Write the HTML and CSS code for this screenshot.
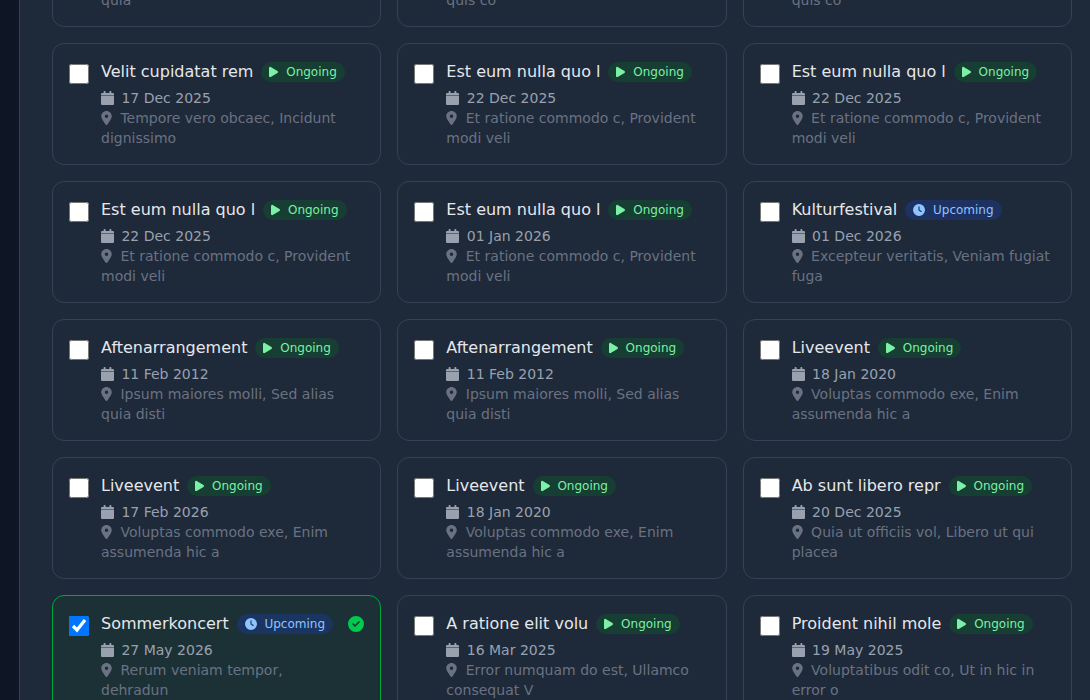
FILE: index.html
```html
<!DOCTYPE html>
<html lang="en">
  <head>
    <meta charset="UTF-8" />
    <meta name="viewport" content="width=device-width, initial-scale=1.0" />
    <title>Select events</title>
    <link rel="stylesheet" href="styles.css">
  </head>
  <body>
    <!-- Icon shapes shared by all cards -->
    <svg class="sprite" aria-hidden="true">
      <symbol id="play" viewBox="0 0 384 512">
        <path d="M73 39c-14.8-9.1-33.4-9.4-48.5-.9S0 62.6 0 80V432c0 17.4 9.4 33.4 24.5 41.9s33.7 8.1 48.5-.9L361 297c14.3-8.7 23-24.2 23-41s-8.7-32.2-23-41L73 39z" />
      </symbol>
      <symbol id="clock" viewBox="0 0 512 512">
        <path d="M256 0a256 256 0 1 1 0 512A256 256 0 1 1 256 0zM232 120V256c0 8 4 15.5 10.7 20l96 64c11 7.4 25.9 4.4 33.3-6.7s4.4-25.9-6.7-33.3L280 243.2V120c0-13.3-10.7-24-24-24s-24 10.7-24 24z" />
      </symbol>
      <symbol id="calendar" viewBox="0 0 13 14">
        <path d="M3.6 0C3 0 2.6.4 2.6 1v1H1.3C.6 2 0 2.5 0 3.2v1.3h13V3.2C13 2.5 12.4 2 11.7 2h-1.300V1c0-.6-.4-1-1-1s-1 .4-1 1v1H4.600V1c0-.6-.4-1-1-1zM0 5v7.700C0 13.400.6 14 1.300 14h10.400c.7 0 1.300-.6 1.300-1.300V5z" />
      </symbol>
      <symbol id="pin" viewBox="0 0 384 512">
        <path d="M215.7 499.2C267 435 384 279.4 384 192C384 86 298 0 192 0S0 86 0 192c0 87.4 117 243 168.3 307.2c12.3 15.3 35.1 15.3 47.4 0zM192 128a64 64 0 1 1 0 128 64 64 0 1 1 0-128z" />
      </symbol>
      <symbol id="check" viewBox="0 0 512 512">
        <path d="M256 512A256 256 0 1 0 256 0a256 256 0 1 0 0 512zM369 209L241 337c-9.4 9.4-24.6 9.4-33.9 0l-64-64c-9.4-9.4-9.4-24.6 0-33.9s24.6-9.4 33.9 0l47 47L335 175c9.4-9.4 24.6-9.4 33.9 0s9.4 24.6 0 33.9z" />
      </symbol>
    </svg>

    <main class="panel">
      <div class="event-grid" id="eventGrid">
        <!-- This row is scrolled almost out of view -->
        <div class="card scrolled"><span class="location">quia</span></div>
        <div class="card scrolled"><span class="location">quis co</span></div>
        <div class="card scrolled"><span class="location">quis co</span></div>
      </div>
    </main>

    <script>
      const events = [
        { title: "Velit cupidatat rem", date: "17 Dec 2025", location: "Tempore vero obcaec, Incidunt dignissimo" },
        { title: "Est eum nulla quo l", date: "22 Dec 2025", location: "Et ratione commodo c, Provident modi veli" },
        { title: "Est eum nulla quo l", date: "22 Dec 2025", location: "Et ratione commodo c, Provident modi veli" },
        { title: "Est eum nulla quo l", date: "22 Dec 2025", location: "Et ratione commodo c, Provident modi veli" },
        { title: "Est eum nulla quo l", date: "01 Jan 2026", location: "Et ratione commodo c, Provident modi veli" },
        { title: "Kulturfestival", date: "01 Dec 2026", location: "Excepteur veritatis, Veniam fugiat fuga", upcoming: true },
        { title: "Aftenarrangement", date: "11 Feb 2012", location: "Ipsum maiores molli, Sed alias quia disti" },
        { title: "Aftenarrangement", date: "11 Feb 2012", location: "Ipsum maiores molli, Sed alias quia disti" },
        { title: "Liveevent", date: "18 Jan 2020", location: "Voluptas commodo exe, Enim assumenda hic a" },
        { title: "Liveevent", date: "17 Feb 2026", location: "Voluptas commodo exe, Enim assumenda hic a" },
        { title: "Liveevent", date: "18 Jan 2020", location: "Voluptas commodo exe, Enim assumenda hic a" },
        { title: "Ab sunt libero repr", date: "20 Dec 2025", location: "Quia ut officiis vol, Libero ut qui placea" },
        { title: "Sommerkoncert", date: "27 May 2026", location: "Rerum veniam tempor, dehradun", upcoming: true, selected: true },
        { title: "A ratione elit volu", date: "16 Mar 2025", location: "Error numquam do est, Ullamco consequat V" },
        { title: "Proident nihil mole", date: "19 May 2025", location: "Voluptatibus odit co, Ut in hic in error o" },
      ];

      function icon(name) {
        return `<svg class="icon icon-${name}" aria-hidden="true"><use href="#${name}" /></svg>`;
      }

      // Build one card per event
      const eventGrid = document.getElementById("eventGrid");
      events.forEach((event) => {
        const card = document.createElement("label");
        card.className = event.selected ? "card selected" : "card";
        const badge = event.upcoming
          ? `<span class="badge upcoming">${icon("clock")} Upcoming</span>`
          : `<span class="badge ongoing">${icon("play")} Ongoing</span>`;
        card.innerHTML = `
          <input type="checkbox" class="card-check" ${event.selected ? "checked" : ""} />
          <span class="card-body">
            <span class="card-head"><span class="title">${event.title}</span>${badge}</span>
            <span class="date">${icon("calendar")} ${event.date}</span>
            <span class="location">${icon("pin")} ${event.location}</span>
          </span>
          ${event.selected ? icon("check") : ""}`;
        eventGrid.appendChild(card);
      });
    </script>
  </body>
</html>
```
FILE: styles.css
```css
* {
  box-sizing: border-box;
}
body {
  margin: 0;
  height: 100vh;
  overflow: hidden;
  padding-left: 19px;
  font-family: "DejaVu Sans", sans-serif;
  background-color: #0e1525;
}
.sprite {
  display: none;
}
.panel {
  height: 100vh;
  overflow: hidden;
  padding: 0 18px 0 32px;
  border-left: 1px solid #364153;
  background-color: #1e2939;
}
/* Scrolled part way through the first row */
.event-grid {
  display: grid;
  grid-template-columns: repeat(3, 1fr);
  gap: 16px;
  margin-top: -95px;
}
.card {
  display: flex;
  align-items: flex-start;
  gap: 12px;
  min-height: 122px;
  padding: 16px;
  border: 1px solid #364153;
  border-radius: 12px;
  cursor: pointer;
}
.card.scrolled {
  align-items: flex-end;
  padding-left: 48px;
}
.card.selected {
  border-color: #00a63e;
  background-color: rgba(13, 84, 43, 0.2);
}
.card-check {
  flex-shrink: 0;
  width: 20px;
  height: 20px;
  margin: 4px 0 0;
}
.card-body {
  flex: 1;
  min-width: 0;
}
.card-head {
  display: flex;
  align-items: center;
  gap: 8px;
  margin-bottom: 4px;
}
.title {
  font-size: 16px;
  line-height: 24px;
  color: #e5e7eb;
}
.badge {
  padding: 2px 8px;
  border-radius: 10px;
  font-size: 12px;
  line-height: 16px;
  white-space: nowrap;
}
.ongoing {
  background-color: rgba(13, 84, 43, 0.5);
  color: #7bf1a8;
}
.upcoming {
  background-color: rgba(28, 57, 142, 0.5);
  color: #8ec5ff;
}
.date,
.location {
  display: block;
  font-size: 14px;
  line-height: 20px;
}
.date {
  color: #99a1af;
}
.location {
  color: #6a7282;
}
.icon {
  height: 1em;
  margin-right: 4px;
  vertical-align: -2px;
  fill: currentColor;
}
.icon-play {
  width: 9px;
}
.icon-clock {
  width: 12px;
}
.icon-calendar {
  width: 13px;
  margin-right: 3px;
}
.icon-pin {
  width: 11px;
}
.icon-check {
  flex-shrink: 0;
  width: 16px;
  height: 16px;
  margin: 4px 0 0;
  color: #00c950;
}
```
